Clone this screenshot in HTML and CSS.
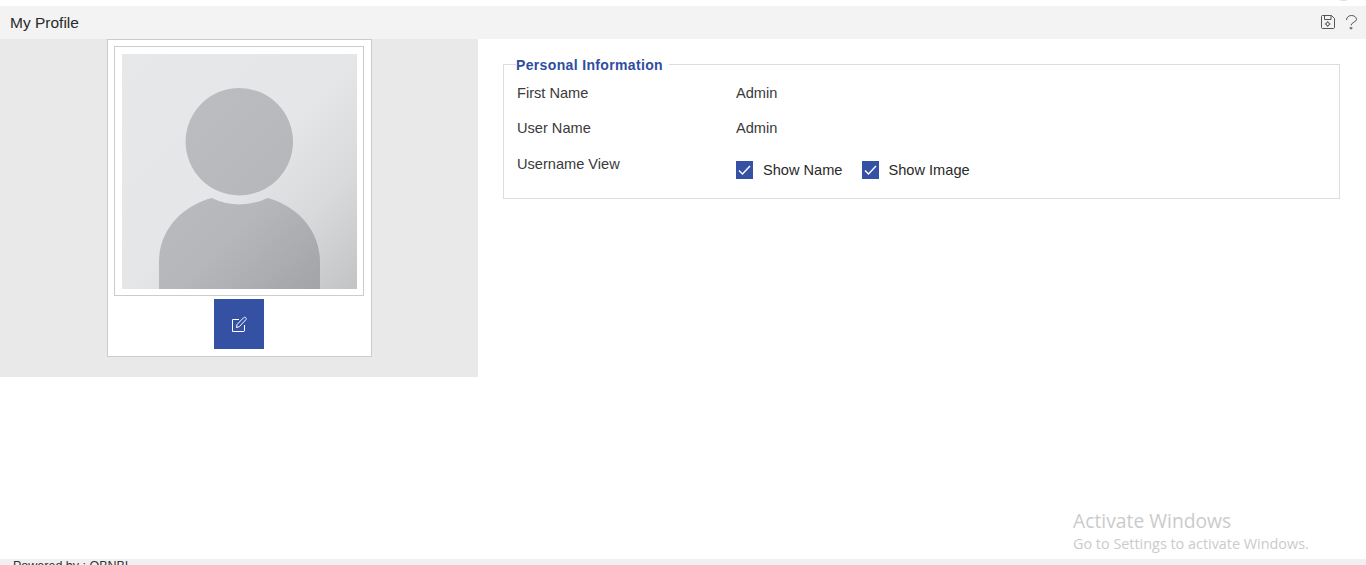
FILE: index.html
```html
<!DOCTYPE html>
<html lang="en">
<head>
<meta charset="utf-8">
<title>My Profile</title>
<link rel="stylesheet" href="styles.css">
</head>
<body>
<div class="page">
  <div class="top-strip"><span class="top-mark"></span></div>
  <header class="title-bar">
    <h1 class="title">My Profile</h1>
    <div class="tools">
      <svg class="tool-icon" width="15" height="15" viewBox="0 0 15 15" fill="none" stroke="#555" stroke-width="1">
        <path d="M.5 1.5C.5 .9 .9 .5 1.5 .5H10.5L13.5 3.5V12.5C13.5 13.1 13.1 13.5 12.5 13.5H1.5C.9 13.5 .5 13.1 .5 12.5Z"/>
        <path d="M3.5 .5V4.5H10V.5"/>
        <circle cx="6.7" cy="9" r="1.7"/>
        <path d="M6.7 6.2V7.3M6.7 10.7V11.8M3.9 9H5M8.4 9H9.5"/>
      </svg>
      <svg class="tool-icon" width="11" height="15" viewBox="0 0 11 15" fill="none" stroke="#555" stroke-width="1">
        <path d="M.5 5C.5 2 3 .5 5.5 .5C8 .5 10.5 2 10.5 4.5C10.5 7 5 7.5 5 10.5"/>
        <path d="M5 12V14.5M3.5 13H6.5"/>
      </svg>
    </div>
  </header>
  <main class="content">
    <aside class="side">
      <div class="card">
        <div class="photo-frame">
          <svg class="photo" width="235" height="235" viewBox="0 0 235 235">
            <defs>
              <linearGradient id="bg" x1="0" y1="0" x2="1" y2="1">
                <stop offset="0" stop-color="#e7e8ea"/>
                <stop offset="0.5" stop-color="#e5e6e8"/>
                <stop offset="0.75" stop-color="#d8d9da"/>
                <stop offset="1" stop-color="#c2c3c5"/>
              </linearGradient>
              <linearGradient id="person" gradientUnits="userSpaceOnUse" x1="40" y1="60" x2="210" y2="235">
                <stop offset="0" stop-color="#bcbdc0"/>
                <stop offset="0.55" stop-color="#b6b7ba"/>
                <stop offset="1" stop-color="#a1a2a6"/>
              </linearGradient>
            </defs>
            <rect width="235" height="235" fill="url(#bg)"/>
            <circle cx="117.3" cy="87.7" r="53.7" fill="url(#person)"/>
            <path d="M37 235V208C37 176 60 152 89.7 144A64 64 0 0 0 145.7 144C175 152 198 176 198 208V235Z" fill="url(#person)"/>
          </svg>
        </div>
        <button class="edit-btn" type="button" aria-label="Edit">
          <svg width="16" height="16" viewBox="0 0 16 16" fill="none" stroke="#fff" stroke-width="1">
            <path d="M8 3.5H1.5V15.5H13L13.5 15V9"/>
            <path d="M5.5 11.5L6 8.5L12.5 1.8C13.2 1.1 14 1 14.7 1.6C15.4 2.3 15.4 3.1 14.7 3.9L8.3 10.7Z"/>
          </svg>
        </button>
      </div>
    </aside>
    <section class="details">
      <fieldset class="group">
        <legend class="group-title">Personal Information</legend>
        <div class="row row-a"><span class="label">First Name</span><span class="value">Admin</span></div>
        <div class="row row-b"><span class="label">User Name</span><span class="value">Admin</span></div>
        <div class="row row-c">
          <span class="label">Username View</span>
          <div class="checks">
            <span class="check"><span class="box"><svg width="17" height="18" viewBox="0 0 17 18" fill="none" stroke="#fff" stroke-width="1.4"><path d="M3 9.5L6.5 13L14 5"/></svg></span>Show Name</span>
            <span class="check"><span class="box"><svg width="17" height="18" viewBox="0 0 17 18" fill="none" stroke="#fff" stroke-width="1.4"><path d="M3 9.5L6.5 13L14 5"/></svg></span>Show Image</span>
          </div>
        </div>
      </fieldset>
    </section>
  </main>
  <footer class="footer">Powered by : OBNBI</footer>
  <div class="watermark">
    <div class="wm-title">Activate Windows</div>
    <div class="wm-sub">Go to Settings to activate Windows.</div>
  </div>
</div>
</body>
</html>
```

FILE: styles.css
```css
* { box-sizing: border-box; }
html, body { margin: 0; padding: 0; height: 100%; overflow: hidden; background: #fff; }
body { font-family: "Liberation Sans", Arial, sans-serif; color: #333; font-size: 14.6px; }

.page { position: relative; height: 565px; display: flex; flex-direction: column; overflow: hidden; }

.top-strip { height: 6px; flex: none; position: relative; }
.top-mark { position: absolute; top: -4px; left: 1338px; width: 11px; height: 5px; border-radius: 50%; background: #ddd; }

.title-bar { height: 33px; flex: none; background: #f3f3f3; display: flex; align-items: center; justify-content: space-between; padding: 0 9px 0 10px; }
.title { margin: 0; font-size: 15.5px; font-weight: 400; color: #2a2a2a; }
.tools { display: flex; align-items: center; gap: 10px; }
.tool-icon { display: block; }

.content { height: 520px; flex: none; display: flex; align-items: flex-start; }

.side { width: 478px; height: 338px; flex: none; background: #e9e9e9; display: flex; justify-content: center; }
.card { width: 265px; height: 318px; background: #fff; border: 1px solid #ccc; padding: 6px; display: flex; flex-direction: column; align-items: center; }
.photo-frame { width: 250px; height: 250px; flex: none; border: 1px solid #ccc; padding: 7px; }
.photo { display: block; }
.edit-btn { width: 50px; height: 50px; margin-top: 3px; padding: 0; border: 0; background: #3551a4; display: flex; align-items: center; justify-content: center; }

.details { flex: 1; padding: 16px 26px 0 25px; }
.group { margin: 0; padding: 0 13px; height: 144px; border: 1px solid #ddd; min-width: 0; }
.group-title { padding: 2px 6px 0 0; margin-left: -1px; font-size: 14px; font-weight: 700; letter-spacing: 0.35px; color: #2f4da0; line-height: 16px; }

.row { display: flex; }
.label { width: 219px; flex: none; line-height: 18px; color: #3a3a3a; }
.value { line-height: 18px; color: #3a3a3a; }
.row-a { margin-top: 11px; }
.row-b { margin-top: 17px; }
.row-c { margin-top: 18px; }

.checks { display: flex; gap: 19px; padding-top: 6px; }
.check { display: flex; align-items: center; gap: 10px; line-height: 18px; color: #2a2a2a; }
.box { width: 17px; height: 18px; background: #3551a4; display: block; flex: none; }
.box svg { display: block; }

.footer { flex: none; height: 26px; background: #f0f0f0; padding: 1px 0 0 13px; font-size: 12.5px; line-height: 12px; color: #333; }

.watermark { position: absolute; left: 1073px; top: 508px; font-family: "Open Sans", sans-serif; color: #cbcbcb; pointer-events: none; }
.wm-title { font-size: 19.3px; line-height: 25px; white-space: nowrap; }
.wm-sub { font-size: 14.4px; line-height: 21px; white-space: nowrap; }
```
